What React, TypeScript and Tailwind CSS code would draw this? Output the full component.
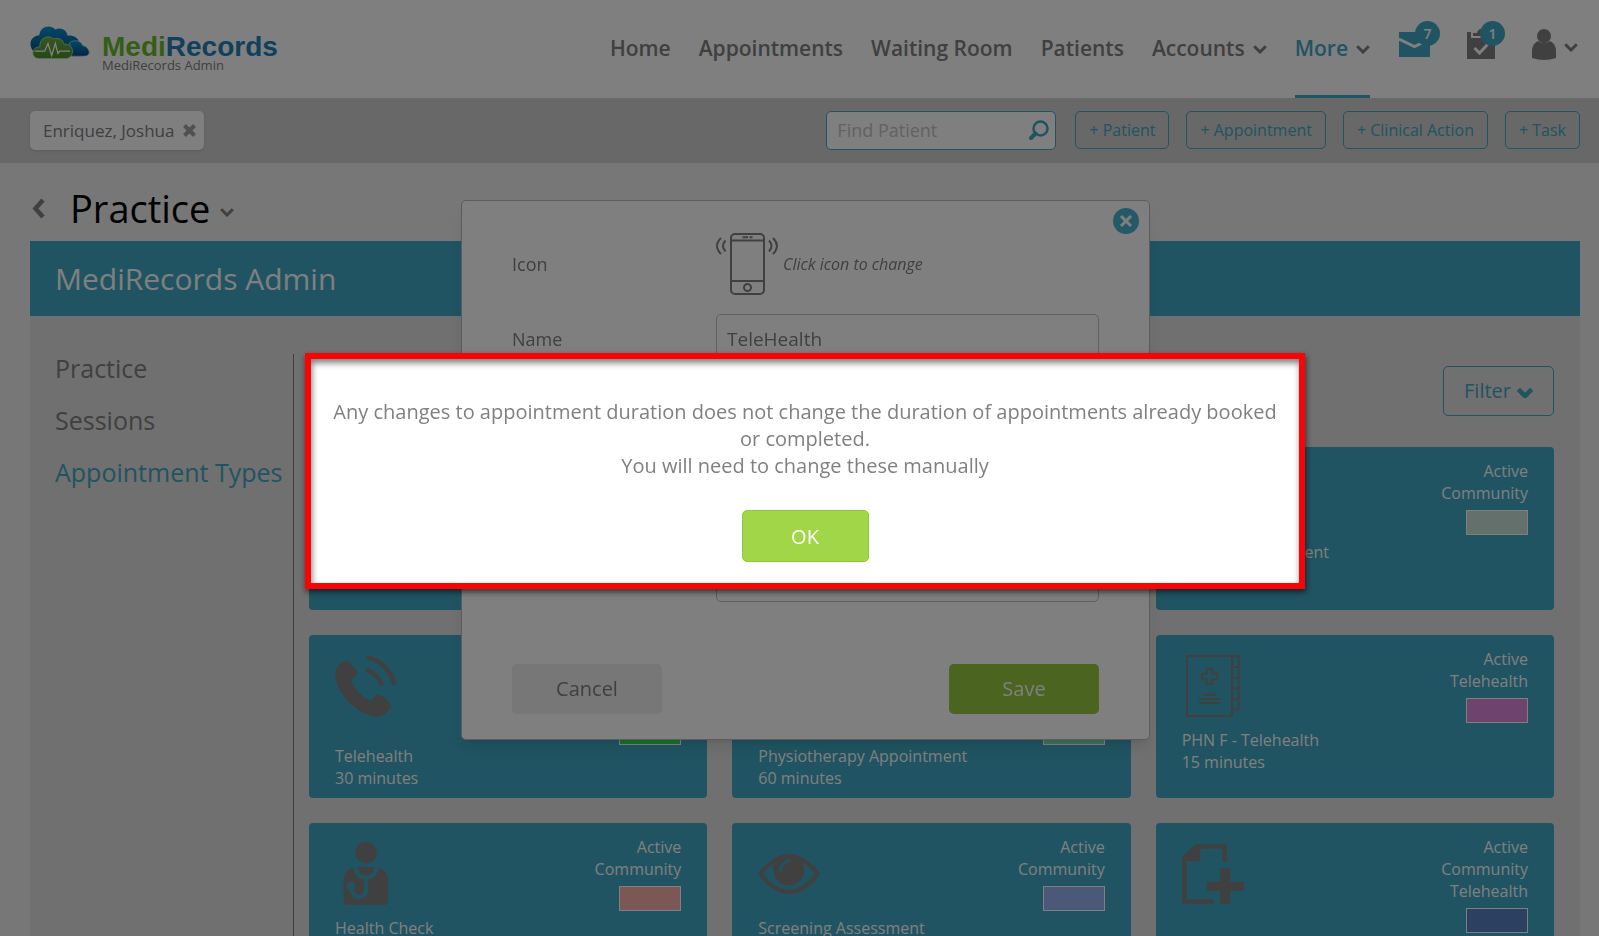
import type { ReactNode } from "react";

type AppointmentType = {
  name: string;
  duration: string;
  tags: string[];
  swatch: string;
  icon: ReactNode;
};

function Chevron({ className, strokeWidth = 3 }: { className?: string; strokeWidth?: number }) {
  return (
    <svg viewBox="0 0 14 9" className={className} fill="none" stroke="currentColor" strokeWidth={strokeWidth} aria-hidden="true">
      <path d="M1.2 1.2 7 7l5.800-5.800" />
    </svg>
  );
}

function CloudLogo() {
  return (
    <svg viewBox="0 0 180 98" className="mb-3.5 h-[33px] w-[60px]" aria-hidden="true">
      <defs>
        <linearGradient id="cloudBlue" x1="0" y1="0" x2="0" y2="1">
          <stop offset="0" stopColor="#0894cf" />
          <stop offset="1" stopColor="#06487f" />
        </linearGradient>
        <linearGradient id="cloudGreen" x1="0" y1="0" x2="0" y2="1">
          <stop offset="0" stopColor="#6fae45" />
          <stop offset="1" stopColor="#4a9028" />
        </linearGradient>
      </defs>
      <path
        d="M16 80C-6 66-4 30 28 27C30 4 58-8 76 10C92 2 112 12 112 28C130 26 142 34 146 44L120 88H30Z"
        fill="url(#cloudBlue)"
      />
      <path
        d="M112 90C112 76 124 66 118 50C134 38 154 44 158 58C178 62 184 84 170 89Q162 91 150 90Z"
        fill="url(#cloudBlue)"
        stroke="#d0e4f0"
        strokeWidth="2"
      />
      <path
        d="M28 97C0 98 4 60 30 62C26 36 54 24 70 38C86 34 100 40 102 54C130 50 138 88 112 97Z"
        fill="url(#cloudGreen)"
        stroke="#d0e8c0"
        strokeWidth="2"
      />
      <path d="M14 75H44L54 52L65 88L76 52L84 82L89 75H120" fill="none" stroke="#fff" strokeWidth="4" />
    </svg>
  );
}

function CallIcon() {
  return (
    <svg viewBox="0 0 186 186" className="size-[62px]" aria-hidden="true">
      <path
        d="M20 22Q31 13 42 22L62 43Q72 54 62 64L48 78Q66 118 106 137L121 123Q132 115 143 124L164 145Q173 154 164 162L148 179Q138 188 118 184C60 172 10 120 1 68Q-2 46 9 34Z"
        fill="currentColor"
      />
      <g fill="none" stroke="currentColor" strokeWidth="14">
        <path d="M95 7C137 16 168 46 179 89" />
        <path d="M93 44Q128 56 141 91" />
      </g>
    </svg>
  );
}

function DoctorIcon() {
  return (
    <svg viewBox="0 0 186 189" className="h-[63px] w-[62px]" aria-hidden="true">
      <circle cx="93" cy="32" r="32" fill="currentColor" />
      <path
        d="M26 177V112Q28 80 62 75H124Q158 82 159 112V177Q158 189 147 189H38Q26 189 26 177Z"
        fill="currentColor"
      />
      <g fill="none" stroke="#40a8c4" strokeWidth="12">
        <path d="M61 72Q64 106 93 106Q122 106 125 72" />
        <path d="M93 106V142Q92 164 70 165Q52 163 48 136" />
      </g>
      <circle cx="48" cy="132" r="12" fill="#40a8c4" />
    </svg>
  );
}

function EyeIcon() {
  return (
    <svg viewBox="0 0 189 121" className="h-10 w-[63px]" aria-hidden="true">
      <path d="M7 60Q50 6 94 6Q140 6 182 60Q140 115 94 115Q50 115 7 60Z" fill="none" stroke="currentColor" strokeWidth="13" />
      <circle cx="94" cy="48" r="47" fill="currentColor" />
      <path d="M68 54Q68 24 99 19" fill="none" stroke="#40a8c4" strokeWidth="9" />
    </svg>
  );
}

function RecordBookIcon() {
  return (
    <svg viewBox="0 0 186 186" className="size-[62px]" fill="none" stroke="currentColor" strokeWidth="6" aria-hidden="true">
      <path d="M15 3H150V183H15Z" />
      <path d="M150 3H170V163H150M150 36H170M150 68H170M150 100H170M150 133H170" />
      <path d="M74 41H91V56H106V73H91V87H74V73H60V56H74Z" />
      <path d="M64 119H102M52 132H115M52 144H115" />
    </svg>
  );
}

function AddDocumentIcon() {
  return (
    <svg viewBox="0 0 186 178" className="h-[60px] w-[62px]" fill="currentColor" aria-hidden="true">
      <path d="M40 0H135V52H121V13H55V50H14V165H95V178H0V37Z" />
      <path d="M115 72H145V112H186V139H145V178H115V139H74V112H115Z" />
    </svg>
  );
}

function MobileIcon() {
  return (
    <svg viewBox="0 0 62 62" className="size-[62px]" fill="none" stroke="currentColor" strokeWidth="2" aria-hidden="true">
      <rect x="15" y="1" width="33" height="60" rx="4" />
      <path d="M15 7.500H48M15 48H48" />
      <path d="M26.500 4.200H32M33.500 4.200H36.500" />
      <circle cx="31.500" cy="54.500" r="3.500" />
      <path d="M5 5Q-3 13 5 21M9.500 7.500Q4.500 13 9.500 18.500M57 5Q65 13 57 21M53 7.500Q58 13 53 18.500" />
    </svg>
  );
}

const appointmentTypes: AppointmentType[] = [
  { name: "", duration: "", tags: [], swatch: "bg-[#c4e0d0]", icon: <CallIcon /> },
  { name: "", duration: "", tags: [], swatch: "bg-[#c4e0d0]", icon: <CallIcon /> },
  { name: "Nurse Appointment", duration: "", tags: ["Active", "Community"], swatch: "bg-[#c8e0d8]", icon: null },
  { name: "Telehealth", duration: "30 minutes", tags: ["Active", "Community", "Telehealth"], swatch: "bg-[#30e050]", icon: <CallIcon /> },
  { name: "Physiotherapy Appointment", duration: "60 minutes", tags: ["Active", "Community", "Telehealth"], swatch: "bg-[#80e0b8]", icon: <CallIcon /> },
  { name: "PHN F - Telehealth", duration: "15 minutes", tags: ["Active", "Telehealth"], swatch: "bg-[#dc88dc]", icon: <RecordBookIcon /> },
  { name: "Health Check", duration: "30 minutes", tags: ["Active", "Community"], swatch: "bg-[#f6b0ac]", icon: <DoctorIcon /> },
  { name: "Screening Assessment", duration: "30 minutes", tags: ["Active", "Community"], swatch: "bg-[#98b0f0]", icon: <EyeIcon /> },
  { name: "Home Visit", duration: "30 minutes", tags: ["Active", "Community", "Telehealth"], swatch: "bg-[#5880c4]", icon: <AddDocumentIcon /> },
];

function TopNav() {
  return (
    <header className="flex h-[98px] shrink-0 items-center justify-between bg-white pl-[30px] pr-[21px]">
      <a href="#home" className="flex items-center">
        <CloudLogo />
        <span className="flex flex-col pl-3 pt-3">
          <span className="font-['Liberation_Sans',Arial,sans-serif] text-[28px] font-bold leading-5 text-[#2280bc]">
            <span className="text-[#68bc2c]">Medi</span>Records
          </span>
          <span className="text-[13px] leading-4">MediRecords Admin</span>
        </span>
      </a>
      <div className="flex h-full items-center">
        <nav className="flex h-full items-center gap-7 text-[21px] font-semibold">
          <a href="#home">Home</a>
          <a href="#appointments">Appointments</a>
          <a href="#waiting-room">Waiting Room</a>
          <a href="#patients">Patients</a>
          <a href="#accounts" className="flex items-center gap-2">
            Accounts
            <Chevron className="w-3.5" />
          </a>
          <a href="#more" className="flex h-full items-center gap-2 border-y-3 border-t-transparent border-b-[#40a8c4] text-[#40a8c4]">
            More
            <Chevron className="w-3.5 text-[#808080]" />
          </a>
        </nav>
        <button type="button" aria-label="Messages" className="relative ml-[29px] text-[#40a8c4]">
          <svg viewBox="0 0 31 25" className="mt-[-9px] h-[25px] w-[31px]" fill="currentColor" aria-hidden="true">
            <path d="M0 0H31V25H0Z" />
            <path d="M0 7L15.500 14.500L23 11" fill="none" stroke="#fff" strokeWidth="3" />
          </svg>
          <span className="absolute -right-2.5 -top-5 flex size-[25px] items-center justify-center rounded-full bg-[#40a8c4] text-sm font-semibold text-white">
            7
          </span>
        </button>
        <button type="button" aria-label="Tasks" className="relative ml-[37px]">
          <svg viewBox="0 0 28 30" className="mt-[-10px] h-[30px] w-7" fill="currentColor" aria-hidden="true">
            <path d="M0 3H4V9H22V3H28V30H0Z" />
            <path d="M6 7V4H10Q11 0 14 0T18 4H22V7Z" />
            <path d="M7.500 19L12.500 24L20.500 15.500" fill="none" stroke="#fff" strokeWidth="3" />
          </svg>
          <span className="absolute -right-2.5 -top-[18px] flex size-[25px] items-center justify-center rounded-full bg-[#40a8c4] text-sm font-semibold text-white">
            1
          </span>
        </button>
        <button type="button" aria-label="Account" className="ml-[37px] flex items-center gap-2">
          <svg viewBox="0 0 24 31" className="mt-[-9px] h-[31px] w-6" fill="currentColor" aria-hidden="true">
            <circle cx="12" cy="7" r="7" />
            <path d="M6 12Q12 16 18 12Q24 15 24 22V29Q12 33 0 29V22Q0 15 6 12Z" />
          </svg>
          <Chevron className="mb-1 w-3.5" />
        </button>
      </div>
    </header>
  );
}

const quickActions = ["+ Patient", "+ Appointment", "+ Clinical Action", "+ Task"];

function QuickBar() {
  return (
    <div className="flex h-[65px] shrink-0 items-center justify-between bg-[#d0d0d0] pl-[30px] pr-[19px]">
      <div className="flex h-[39px] items-center gap-[9px] rounded-[5px] bg-white pl-[13px] pr-2 text-[17px] shadow-sm">
        Enriquez, Joshua
        <button type="button" aria-label="Close Enriquez, Joshua">
          <svg viewBox="0 0 13 13" className="size-[13px] text-[#a0a0a0]" stroke="currentColor" strokeWidth="4" aria-hidden="true">
            <path d="M1.500 1.500 11.500 11.500M11.500 1.500 1.500 11.500" />
          </svg>
        </button>
      </div>
      <div className="flex items-center gap-[17px] pb-px">
        <label className="mr-0.5 flex h-[39px] w-[230px] items-center rounded-[5px] border border-[#40a8c4] bg-white px-2.5">
          <input
            type="text"
            aria-label="Find Patient"
            placeholder="Find Patient"
            className="w-full min-w-0 flex-1 text-lg outline-none placeholder:text-[#c4c4c4]"
          />
          <svg viewBox="0 0 20 20" className="mr-[-4px] size-5 shrink-0 text-[#40a8c4]" fill="none" stroke="currentColor" aria-hidden="true">
            <circle cx="11.500" cy="8.500" r="7" strokeWidth="2.500" />
            <path d="M6.500 13.500 2 18" strokeWidth="4" strokeLinecap="round" />
          </svg>
        </label>
        {quickActions.map((action) => (
          <button
            key={action}
            type="button"
            className="h-[38px] rounded-[5px] border border-[#40a8c4] px-[13px] text-base text-[#40a8c4]"
          >
            {action}
          </button>
        ))}
      </div>
    </div>
  );
}

function AppointmentCard({ type }: { type: AppointmentType }) {
  return (
    <article className="h-[163px] rounded-[4px] bg-[#40a8c4] px-[26px] pt-[13px] text-base leading-[22px] text-white">
      <div className="flex min-h-[81px] justify-between">
        <div className="flex h-[75px] w-[62px] items-center text-[#808080]">{type.icon}</div>
        <div className="flex flex-col items-end">
          {type.tags.map((tag) => (
            <span key={tag}>{tag}</span>
          ))}
          <span className={`mt-1.5 h-[25px] w-[62px] border border-white ${type.swatch}`} />
        </div>
      </div>
      <h3>{type.name}</h3>
      <p>{type.duration}</p>
    </article>
  );
}

function PracticePage() {
  return (
    <main className="flex flex-1 flex-col pl-[30px] pr-[19px]">
      <div className="flex h-[78px] shrink-0 items-center pt-3">
        <button type="button" aria-label="Back" className="pl-0.5">
          <svg viewBox="0 0 13 21" className="h-[21px] w-[13px]" fill="none" stroke="currentColor" strokeWidth="4.500" aria-hidden="true">
            <path d="M11 2 3.500 10.500 11 19" />
          </svg>
        </button>
        <h1 className="pl-[25px] text-[38px] leading-[52px] text-black">Practice</h1>
        <button type="button" aria-label="Switch section" className="pl-2.5 pt-2">
          <Chevron className="w-3.5" />
        </button>
      </div>
      <h2 className="flex h-[75px] shrink-0 items-center bg-[#40a8c4] px-[25px] text-3xl text-white">MediRecords Admin</h2>
      <div className="flex flex-1 bg-[#e0e0e0] pr-[26px] pt-[38px]">
        <nav className="flex w-[264px] shrink-0 flex-col gap-6 border-r border-[#808080] pl-[25px] text-[25px] leading-7">
          <a href="#practice">Practice</a>
          <a href="#sessions">Sessions</a>
          <a href="#types" className="whitespace-nowrap text-[#40a8c4]">Appointment Types</a>
        </nav>
        <section className="min-w-0 flex-1 pl-[15px] pt-3">
          <div className="flex justify-end">
            <button
              type="button"
              className="flex h-[50px] items-center gap-1.5 rounded-[5px] border border-[#40a8c4] px-5 text-xl text-[#40a8c4]"
            >
              Filter
              <Chevron className="mt-1 w-4" strokeWidth={4} />
            </button>
          </div>
          <div className="mt-[31px] grid grid-cols-3 gap-[25px]">
            {appointmentTypes.map((type, index) => (
              <AppointmentCard key={index} type={type} />
            ))}
          </div>
        </section>
      </div>
    </main>
  );
}

function EditTypeDialog() {
  return (
    <div className="fixed inset-0 flex items-start justify-center pl-3 pt-[200px]">
      <form
        aria-label="Edit appointment type"
        className="relative flex h-[540px] w-[689px] flex-col rounded-[5px] border border-[#b8b8b8] bg-white px-[50px] pb-[25px] pt-8 text-lg shadow-lg"
      >
        <button
          type="button"
          aria-label="Close"
          className="absolute right-2.5 top-[7px] flex size-[26px] items-center justify-center rounded-full bg-[#4cb2ce]"
        >
          <svg viewBox="0 0 14 14" className="size-3.5" stroke="#fff" strokeWidth="3" aria-hidden="true">
            <path d="M2 2 12 12M12 2 2 12" />
          </svg>
        </button>
        <div className="flex items-center">
          <span className="w-[204px]">Icon</span>
          <button type="button" className="flex items-center gap-[5px] text-base italic">
            <MobileIcon />
            Click icon to change
          </button>
        </div>
        <div className="mt-[19px] flex items-center">
          <label htmlFor="type-name" className="w-[204px]">Name</label>
          <input
            id="type-name"
            type="text"
            defaultValue="TeleHealth"
            className="h-[50px] min-w-0 flex-1 rounded-[5px] border border-[#c0c0c0] px-2.5 text-[19px] outline-none"
          />
        </div>
        <div className="mt-[38px] flex pl-[204px]">
          <textarea
            aria-label="Description"
            className="h-[200px] min-w-0 flex-1 resize-none rounded-[5px] border border-[#c0c0c0] outline-none"
          />
        </div>
        <div className="mt-auto flex justify-between text-xl">
          <button type="button" className="h-[50px] w-[150px] rounded-[5px] bg-[#eee]">Cancel</button>
          <button type="submit" className="h-[50px] w-[150px] rounded-[5px] bg-[#96c840] text-white">Save</button>
        </div>
      </form>
    </div>
  );
}

function DurationAlert() {
  return (
    <div className="fixed inset-0 flex items-start justify-center bg-black/50 pl-[11px] pt-[353px]">
      <div
        role="alertdialog"
        aria-label="Duration change notice"
        className="flex h-[236px] w-[1000px] flex-col items-center border-6 border-[#f80404] bg-white px-4 pt-[39px] text-center text-xl leading-[27px] shadow-[1px_3px_6px_rgba(0,0,0,0.6),inset_1px_4px_6px_rgba(0,0,0,0.5)]"
      >
        <p>
          Any changes to appointment duration does not change the duration of appointments already booked or completed.
          <br />
          You will need to change these manually
        </p>
        <button type="button" className="mt-[31px] h-[52px] w-[127px] rounded-[5px] border border-[#92c83e] bg-[#a2d649] text-white">
          OK
        </button>
      </div>
    </div>
  );
}

export default function App() {
  return (
    <div className="flex h-screen flex-col overflow-hidden bg-[#eee] font-['Open_Sans',sans-serif] text-[#808080]">
      <TopNav />
      <QuickBar />
      <PracticePage />
      <EditTypeDialog />
      <DurationAlert />
    </div>
  );
}
